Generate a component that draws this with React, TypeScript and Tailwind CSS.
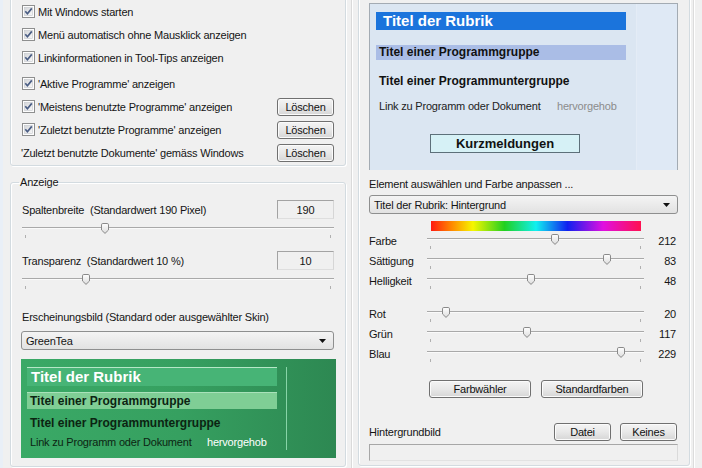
import React from "react";

const Check = () => (
  <svg width="13" height="13" viewBox="0 0 13 13" className="shrink-0">
    <defs>
      <linearGradient id="cbg" x1="0" y1="0" x2="1" y2="1">
        <stop offset="0" stopColor="#d4d6d9" />
        <stop offset="1" stopColor="#f8f8f8" />
      </linearGradient>
    </defs>
    <rect x="0.5" y="0.5" width="12" height="12" fill="#fdfdfd" stroke="#8e8f8f" />
    <rect x="2.5" y="2.5" width="8" height="8" fill="url(#cbg)" stroke="#c4c7cb" strokeWidth="0.6" />
    <path d="M3.3 6.3 L5.4 8.7 L9.8 3.4" fill="none" stroke="#4a5d84" strokeWidth="1.7" />
  </svg>
);

const Btn = ({ children, className = "" }: { children: React.ReactNode; className?: string }) => (
  <div
    className={
      "h-[18px] flex items-center justify-center rounded-[3px] border border-[#707070] bg-linear-to-b from-[#f4f4f4] via-[#e8e8e8] to-[#d6d6d6] shadow-[inset_0_0_0_1px_#fbfbfb] text-[#111] " +
      className
    }
  >
    {children}
  </div>
);

const Thumb = ({ pct }: { pct: number }) => (
  <svg
    width="8"
    height="11"
    viewBox="0 0 8 11"
    className="absolute top-[2px]"
    style={{ left: `calc(${pct}% - 4px)` }}
  >
    <defs>
      <linearGradient id="thg" x1="0" y1="0" x2="0" y2="1">
        <stop offset="0" stopColor="#ffffff" />
        <stop offset="1" stopColor="#dcdcdc" />
      </linearGradient>
    </defs>
    <path
      d="M0.5 1.8 Q0.5 0.5 1.8 0.5 H6.2 Q7.5 0.5 7.5 1.8 V7 L4 10.4 L0.5 7 Z"
      fill="url(#thg)"
      stroke="#8a8a8a"
      strokeWidth="1"
    />
  </svg>
);

const Slider = ({ pct, className = "" }: { pct: number; className?: string }) => (
  <div className={"relative h-[20px] pt-[6px] " + className}>
    <div className="h-[2px] border-t border-[#a9a9a9] bg-[#fafafa]" />
    <div className="mt-[6px] flex justify-between px-[3px]">
      <span className="w-px h-[3px] bg-[#b0b0b0]" />
      <span className="w-px h-[3px] bg-[#b0b0b0]" />
    </div>
    <Thumb pct={pct} />
  </div>
);

const Arrow = () => (
  <svg width="7" height="4" viewBox="0 0 7 4" className="shrink-0">
    <path d="M0 0 H7 L3.5 4 Z" fill="#111" />
  </svg>
);

const Combo = ({ text, className = "" }: { text: string; className?: string }) => (
  <div
    className={
      "h-[19px] rounded-[3px] border border-[#8e8f8f] bg-linear-to-b from-[#f4f4f4] to-[#e2e2e2] flex items-center justify-between pl-[4px] pr-[7px] " +
      className
    }
  >
    <span>{text}</span>
    <Arrow />
  </div>
);

const ValueBox = ({ v }: { v: string }) => (
  <div className="w-[57px] h-[19px] border border-[#a3a3a3] border-b-[#dedede] border-r-[#d6d6d6] bg-[#f0f0f0] flex items-center justify-center">
    {v}
  </div>
);

const colorRows1 = [
  { label: "Farbe", pct: 58.8, v: "212" },
  { label: "Sättigung", pct: 82.9, v: "83" },
  { label: "Helligkeit", pct: 48.1, v: "48" },
];
const colorRows2 = [
  { label: "Rot", pct: 8.8, v: "20" },
  { label: "Grün", pct: 46.3, v: "117" },
  { label: "Blau", pct: 89.4, v: "229" },
];

const ColorRow = ({ label, pct, v }: { label: string; pct: number; v: string }) => (
  <div className="h-[20px] flex">
    <div className="w-[58px] pt-[2px] leading-[14px]">{label}</div>
    <Slider pct={pct} className="flex-1" />
    <div className="w-[34px] pt-[2px] pr-[2px] leading-[14px] text-right">{v}</div>
  </div>
);

export default function App() {
  return (
    <div className="w-[702px] h-[468px] overflow-hidden bg-[#f0f0f0] flex items-start text-[11px] leading-[14px] tracking-[-0.2px] text-[#151515] font-['Liberation_Sans',Arial,sans-serif]">
      <div className="w-[3px] h-full shrink-0 bg-[#e9eff7]" />

      {/* Left column */}
      <div className="ml-[7px] w-[336px] shrink-0 flex flex-col">
        <div className="-mt-[10px] pt-[9px] px-[11px] border border-[#d3dbe0] rounded-[3px] shadow-[inset_1px_1px_0_#fff,1px_1px_0_#fff]">
          <div className="h-[23px] flex items-center gap-[3px]">
            <Check />
            <span>Mit Windows starten</span>
          </div>
          <div className="h-[23px] flex items-center gap-[3px]">
            <Check />
            <span>Menü automatisch ohne Mausklick anzeigen</span>
          </div>
          <div className="h-[23px] flex items-center gap-[3px]">
            <Check />
            <span>Linkinformationen in Tool-Tips anzeigen</span>
          </div>
          <div className="mt-[3px] h-[23px] flex items-center gap-[3px]">
            <Check />
            <span>'Aktive Programme' anzeigen</span>
          </div>
          <div className="h-[23px] flex items-center">
            <div className="flex items-center gap-[3px] flex-1">
              <Check />
              <span>'Meistens benutzte Programme' anzeigen</span>
            </div>
            <Btn className="w-[57px]">Löschen</Btn>
          </div>
          <div className="h-[23px] flex items-center">
            <div className="flex items-center gap-[3px] flex-1">
              <Check />
              <span>'Zuletzt benutzte Programme' anzeigen</span>
            </div>
            <Btn className="w-[57px]">Löschen</Btn>
          </div>
          <div className="h-[23px] flex items-center">
            <span className="flex-1 -ml-[1px]">'Zuletzt benutzte Dokumente' gemäss Windows</span>
            <Btn className="w-[57px]">Löschen</Btn>
          </div>
          <div className="h-[1px]" />
        </div>

        <fieldset className="mt-[10px] px-[11px] pt-[11px] pb-[8px] border border-[#d3dbe0] rounded-[3px] shadow-[inset_1px_1px_0_#fff,1px_1px_0_#fff]">
          <legend className="-ml-[3px] px-[1px] leading-[13px]">Anzeige</legend>
          <div className="h-[19px] flex items-center justify-between">
            <span className="whitespace-pre">Spaltenbreite  (Standardwert 190 Pixel)</span>
            <ValueBox v="190" />
          </div>
          <Slider pct={26.6} className="mt-[2px]" />
          <div className="mt-[10px] h-[19px] flex items-center justify-between">
            <span className="whitespace-pre">Transparenz  (Standardwert 10 %)</span>
            <ValueBox v="10" />
          </div>
          <Slider pct={20.5} className="mt-[2px]" />
          <div className="mt-[18px] h-[14px]">Erscheinungsbild (Standard oder ausgewählter Skin)</div>
          <Combo text="GreenTea" className="mt-[7px] -ml-[1px]" />
          <div className="mt-[9px] -ml-[1px] -mr-[2px] h-[99px] bg-linear-to-r from-[#3aa966] via-[#36a060] to-[#2d8852] pl-[6px] pt-[8px] flex tracking-normal">
            <div className="w-[250px] flex flex-col">
              <div className="h-[19px] border-t border-[#b6e7c7] bg-[#47b476] text-white text-[15px] font-bold pl-[4px] leading-[18px]">
                Titel der Rubrik
              </div>
              <div className="mt-[6px] h-[17px] border-t border-[#a9e1ba] bg-[#7fce95] text-[12px] font-bold pl-[3px] leading-[16px] text-[#0c2412]">
                Titel einer Programmgruppe
              </div>
              <div className="mt-[7px] text-[12px] font-bold leading-[14px] pl-[3px] text-[#0c2412]">
                Titel einer Programmuntergruppe
              </div>
              <div className="mt-[5px] pl-[3px] flex leading-[14px] tracking-[-0.2px]">
                <span className="w-[177px] text-[#0c2412]">Link zu Programm oder Dokument</span>
                <span className="text-white">hervorgehob</span>
              </div>
            </div>
            <div className="ml-[9px] w-[1px] h-[83px] bg-[#87d4a7]" />
          </div>
        </fieldset>
      </div>

      {/* divider */}
      <div className="ml-[5px] w-[2px] h-full shrink-0 border-l border-[#dadada] border-r border-r-white" />

      {/* Right column */}
      <div className="ml-[5px] w-[332px] h-[476px] shrink-0 -mt-[10px] pt-[12px] pl-[10px] pr-[11px] border border-[#d3dbe0] rounded-[3px] shadow-[inset_1px_1px_0_#fff,1px_1px_0_#fff] flex flex-col">
        <div className="h-[167px] flex border-t border-l border-r border-[#a3abb3] bg-[#dbe6f2] tracking-normal">
          <div className="w-[267px] border-r border-[#e4ecf6] pl-[6px] pt-[8px] flex flex-col">
            <div className="w-[250px] h-[18px] bg-[#1b74dc] text-white font-bold text-[15px] pl-[7px] leading-[18px]">
              Titel der Rubrik
            </div>
            <div className="mt-[15px] w-[250px] h-[15px] bg-[#aabde6] font-bold text-[12px] pl-[3px] leading-[15px] text-[#111]">
              Titel einer Programmgruppe
            </div>
            <div className="mt-[14px] font-bold text-[12px] pl-[3px] leading-[14px] text-[#111]">
              Titel einer Programmuntergruppe
            </div>
            <div className="mt-[11px] pl-[3px] flex leading-[14px] tracking-[-0.2px]">
              <span className="w-[178px] text-[#222]">Link zu Programm oder Dokument</span>
              <span className="text-[#8c8c8c]">hervorgehob</span>
            </div>
            <div className="mt-[21px] ml-[54px] w-[150px] h-[19px] border border-[#5d707a] bg-[#d6f1f6] font-bold text-[13px] flex items-center justify-center text-[#111]">
              Kurzmeldungen
            </div>
          </div>
          <div className="flex-1 bg-[#dfe9f5]" />
        </div>

        <div className="mt-[7px] h-[14px]">Element auswählen und Farbe anpassen ...</div>
        <Combo text="Titel der Rubrik: Hintergrund" className="mt-[4px]" />
        <div className="mt-[7px] ml-[62px] w-[210px] h-[10px] bg-[linear-gradient(to_right,#ff1a10,#ff8a00_10%,#f6f600_20%,#20d020_35%,#10f0f0_50%,#1020f0_65%,#e010e0_82%,#ff1050)]" />
        <div className="mt-[1px]">
          {colorRows1.map((r) => (
            <ColorRow key={r.label} {...r} />
          ))}
        </div>
        <div className="mt-[13px]">
          {colorRows2.map((r) => (
            <ColorRow key={r.label} {...r} />
          ))}
        </div>
        <div className="mt-[15px] ml-[60px] flex gap-[10px]">
          <Btn className="w-[102px]">Farbwähler</Btn>
          <Btn className="w-[102px]">Standardfarben</Btn>
        </div>
        <div className="mt-[25px] h-[18px] flex items-center">
          <span className="flex-1">Hintergrundbild</span>
          <Btn className="w-[57px]">Datei</Btn>
          <Btn className="w-[57px] ml-[9px] mr-[1px]">Keines</Btn>
        </div>
        <div className="mt-[3px] h-[17px] border border-[#a7a7a7] border-b-[#e2e2e2] border-r-[#dadada] bg-[#f0f0f0]" />
      </div>

      <div className="ml-[3px] w-[1px] h-full shrink-0 bg-[#dcdcdc]" />
      <div className="w-[1px] h-full shrink-0 bg-white" />
    </div>
  );
}
